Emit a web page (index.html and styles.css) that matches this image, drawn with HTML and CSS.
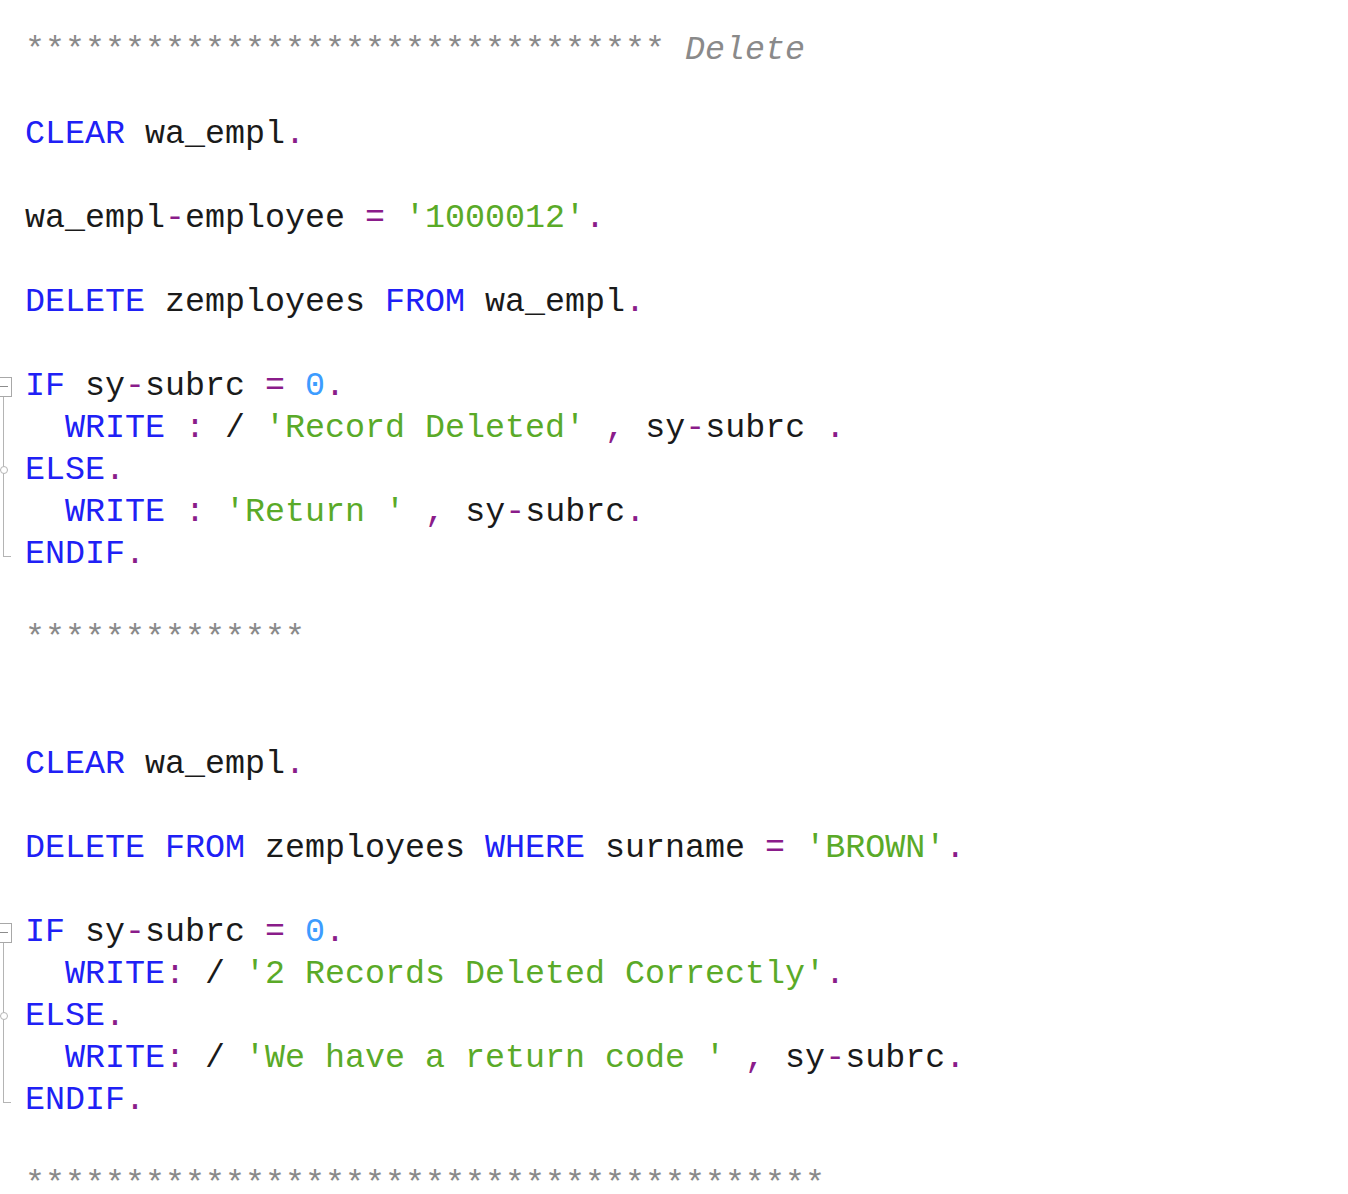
FILE: index.html
```html
<!DOCTYPE html>
<html lang="en">
<head>
    <meta charset="UTF-8">
    <title>ABAP Delete</title>
    <link rel="stylesheet" href="styles.css">
</head>
<body>
    <div class="editor">
        <div class="line"><span class="gutter"></span><span class="code"><span class="cm">******************************** <i>Delete</i></span></span></div>
        <div class="line"><span class="gutter"></span><span class="code"></span></div>
        <div class="line"><span class="gutter"></span><span class="code"><span class="kw">CLEAR</span> wa_empl<span class="op">.</span></span></div>
        <div class="line"><span class="gutter"></span><span class="code"></span></div>
        <div class="line"><span class="gutter"></span><span class="code">wa_empl<span class="op">-</span>employee <span class="op">=</span> <span class="str">'1000012'</span><span class="op">.</span></span></div>
        <div class="line"><span class="gutter"></span><span class="code"></span></div>
        <div class="line"><span class="gutter"></span><span class="code"><span class="kw">DELETE</span> zemployees <span class="kw">FROM</span> wa_empl<span class="op">.</span></span></div>
        <div class="line"><span class="gutter"></span><span class="code"></span></div>
        <div class="line"><span class="gutter fold-open"></span><span class="code"><span class="kw">IF</span> sy<span class="op">-</span>subrc <span class="op">=</span> <span class="num">0</span><span class="op">.</span></span></div>
        <div class="line"><span class="gutter fold-mid"></span><span class="code">  <span class="kw">WRITE</span> <span class="op">:</span> / <span class="str">'Record Deleted'</span> <span class="op">,</span> sy<span class="op">-</span>subrc <span class="op">.</span></span></div>
        <div class="line"><span class="gutter fold-mid fold-knot"></span><span class="code"><span class="kw">ELSE</span><span class="op">.</span></span></div>
        <div class="line"><span class="gutter fold-mid"></span><span class="code">  <span class="kw">WRITE</span> <span class="op">:</span> <span class="str">'Return '</span> <span class="op">,</span> sy<span class="op">-</span>subrc<span class="op">.</span></span></div>
        <div class="line"><span class="gutter fold-end"></span><span class="code"><span class="kw">ENDIF</span><span class="op">.</span></span></div>
        <div class="line"><span class="gutter"></span><span class="code"></span></div>
        <div class="line"><span class="gutter"></span><span class="code"><span class="cm">**************</span></span></div>
        <div class="line"><span class="gutter"></span><span class="code"></span></div>
        <div class="line"><span class="gutter"></span><span class="code"></span></div>
        <div class="line"><span class="gutter"></span><span class="code"><span class="kw">CLEAR</span> wa_empl<span class="op">.</span></span></div>
        <div class="line"><span class="gutter"></span><span class="code"></span></div>
        <div class="line"><span class="gutter"></span><span class="code"><span class="kw">DELETE</span> <span class="kw">FROM</span> zemployees <span class="kw">WHERE</span> surname <span class="op">=</span> <span class="str">'BROWN'</span><span class="op">.</span></span></div>
        <div class="line"><span class="gutter"></span><span class="code"></span></div>
        <div class="line"><span class="gutter fold-open"></span><span class="code"><span class="kw">IF</span> sy<span class="op">-</span>subrc <span class="op">=</span> <span class="num">0</span><span class="op">.</span></span></div>
        <div class="line"><span class="gutter fold-mid"></span><span class="code">  <span class="kw">WRITE</span><span class="op">:</span> / <span class="str">'2 Records Deleted Correctly'</span><span class="op">.</span></span></div>
        <div class="line"><span class="gutter fold-mid fold-knot"></span><span class="code"><span class="kw">ELSE</span><span class="op">.</span></span></div>
        <div class="line"><span class="gutter fold-mid"></span><span class="code">  <span class="kw">WRITE</span><span class="op">:</span> / <span class="str">'We have a return code '</span> <span class="op">,</span> sy<span class="op">-</span>subrc<span class="op">.</span></span></div>
        <div class="line"><span class="gutter fold-end"></span><span class="code"><span class="kw">ENDIF</span><span class="op">.</span></span></div>
        <div class="line"><span class="gutter"></span><span class="code"></span></div>
        <div class="line"><span class="gutter"></span><span class="code"><span class="cm">****************************************</span></span></div>
    </div>
</body>
</html>
```

FILE: styles.css
```css
/* Grund-Layout */
body {
    margin: 0;
    background: #fff;
}

.editor {
    padding-top: 29px;
    font-family: "Courier New", "Liberation Mono", monospace;
    font-size: 33.33px;
    color: #1a1a1a;
}

.line {
    display: flex;
    height: 42px;
    line-height: 42px;
}

.code {
    white-space: pre;
}

/* Faltleiste links */
.gutter {
    position: relative;
    flex: 0 0 25px;
}

/* Kaestchen mit Minus, darunter Anschluss an die Linie */
.fold-open {
    background: linear-gradient(#b4b4b4, #b4b4b4) no-repeat 3px 32px / 1px 10px;
}

.fold-open::before {
    content: "";
    position: absolute;
    left: -4px;
    top: 12px;
    width: 16px;
    height: 20px;
    border: 1px solid #a8a8a8;
    box-sizing: border-box;
}

.fold-open::after {
    content: "";
    position: absolute;
    left: 0;
    top: 21px;
    width: 8px;
    height: 1px;
    background: #8c8c8c;
}

.fold-mid::before {
    content: "";
    position: absolute;
    left: 3px;
    top: 0;
    bottom: 0;
    width: 1px;
    background: #b4b4b4;
}

.fold-knot::after {
    content: "";
    position: absolute;
    left: 0;
    top: 17px;
    width: 8px;
    height: 8px;
    border: 1px solid #b4b4b4;
    border-radius: 50%;
    background: #fff;
    box-sizing: border-box;
}

.fold-end::before {
    content: "";
    position: absolute;
    left: 3px;
    top: 0;
    width: 7px;
    height: 23px;
    border-left: 1px solid #b4b4b4;
    border-bottom: 1px solid #b4b4b4;
}

/* Syntaxfarben */
.kw { color: #2020f5; }
.op { color: #8a1c8a; }
.str { color: #5aaa28; }
.num { color: #3d9cff; }
.cm { color: #8a8a8a; }
.cm i { font-style: italic; }
```
